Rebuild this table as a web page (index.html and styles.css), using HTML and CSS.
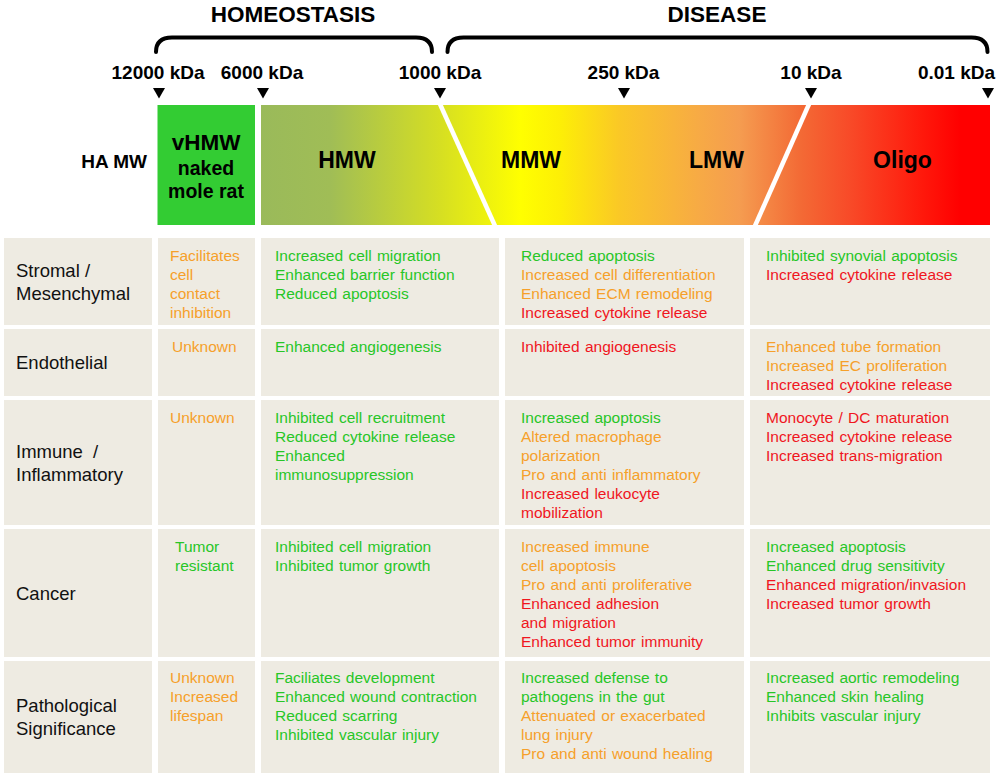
FILE: index.html
```html
<!DOCTYPE html>
<html>
<head>
<meta charset="utf-8">
<link rel="stylesheet" href="styles.css">
</head>
<body>
<div class="page">
  <svg class="scale" width="1000" height="238" viewBox="0 0 1000 238" xmlns="http://www.w3.org/2000/svg">
    <defs>
      <linearGradient id="band" gradientUnits="userSpaceOnUse" x1="261" y1="0" x2="990" y2="0">
        <stop offset="0" stop-color="#9aba5a"/>
        <stop offset="0.095" stop-color="#a0bd56"/>
        <stop offset="0.246" stop-color="#d6df22"/>
        <stop offset="0.356" stop-color="#ffff00"/>
        <stop offset="0.41" stop-color="#fdef06"/>
        <stop offset="0.492" stop-color="#fac826"/>
        <stop offset="0.602" stop-color="#f7aa45"/>
        <stop offset="0.657" stop-color="#f59c50"/>
        <stop offset="0.74" stop-color="#f36a35"/>
        <stop offset="0.808" stop-color="#f84a28"/>
        <stop offset="0.904" stop-color="#ff1a0c"/>
        <stop offset="0.959" stop-color="#ff0000"/>
        <stop offset="1" stop-color="#ff0000"/>
      </linearGradient>
    </defs>
    <text class="title" x="293" y="22">HOMEOSTASIS</text>
    <text class="title" x="717" y="22">DISEASE</text>
    <path class="brace" d="M156 52 C156 42 162 37.5 172 37.5 L416 37.5 C426 37.5 432 42 432 52"/>
    <path class="brace" d="M447.5 52 C447.5 42 453.5 37.5 463.5 37.5 L971.5 37.5 C981.5 37.5 987.5 42 987.5 52"/>
    <text class="kda" x="158" y="79">12000 kDa</text>
    <text class="kda" x="262" y="79">6000 kDa</text>
    <text class="kda" x="440" y="79">1000 kDa</text>
    <text class="kda" x="623.5" y="79">250 kDa</text>
    <text class="kda" x="811" y="79">10 kDa</text>
    <text class="kda end" x="995" y="79">0.01 kDa</text>
    <polygon class="tri" points="153,88 165,88 159,98.5"/>
    <polygon class="tri" points="257,88 269,88 263,98.5"/>
    <polygon class="tri" points="434,88 446,88 440,98.5"/>
    <polygon class="tri" points="618,88 630,88 624,98.5"/>
    <polygon class="tri" points="805,88 817,88 811,98.5"/>
    <polygon class="tri" points="982,88 994,88 988,98.5"/>
    <text class="kda end" x="147" y="168">HA MW</text>
    <rect x="157.5" y="105" width="97.5" height="120" fill="#33cc33"/>
    <rect x="261" y="105" width="729" height="120" fill="url(#band)"/>
    <line class="cut" x1="439.5" y1="103" x2="495.5" y2="227"/>
    <line class="cut" x1="809.5" y1="103" x2="754.5" y2="227"/>
    <text class="big" x="206" y="150">vHMW</text>
    <text class="mid" x="206" y="175">naked</text>
    <text class="mid" x="206" y="198">mole rat</text>
    <text class="band-label" x="347" y="168">HMW</text>
    <text class="band-label" x="531" y="168">MMW</text>
    <text class="band-label" x="716.5" y="168">LMW</text>
    <text class="band-label" x="902.5" y="168">Oligo</text>
  </svg>

  <div class="table">
    <div class="cell label">Stromal /<br>Mesenchymal</div>
    <div class="cell c2">
      <div class="o">Facilitates</div><div class="o">cell</div><div class="o">contact</div><div class="o">inhibition</div>
    </div>
    <div class="cell c3">
      <div class="g">Increased cell migration</div><div class="g">Enhanced barrier function</div><div class="g">Reduced apoptosis</div>
    </div>
    <div class="cell c4">
      <div class="g">Reduced apoptosis</div><div class="o">Increased cell differentiation</div><div class="o">Enhanced ECM remodeling</div><div class="r">Increased cytokine release</div>
    </div>
    <div class="cell c5">
      <div class="g">Inhibited synovial apoptosis</div><div class="r">Increased cytokine release</div>
    </div>

    <div class="cell label">Endothelial</div>
    <div class="cell c2 nudge2"><div class="o">Unknown</div></div>
    <div class="cell c3"><div class="g">Enhanced angiogenesis</div></div>
    <div class="cell c4"><div class="r">Inhibited angiogenesis</div></div>
    <div class="cell c5">
      <div class="o">Enhanced tube formation</div><div class="o">Increased EC proliferation</div><div class="r">Increased cytokine release</div>
    </div>

    <div class="cell label">Immune&nbsp; /<br>Inflammatory</div>
    <div class="cell c2"><div class="o">Unknown</div></div>
    <div class="cell c3">
      <div class="g">Inhibited cell recruitment</div><div class="g">Reduced cytokine release</div><div class="g">Enhanced<br>immunosuppression</div>
    </div>
    <div class="cell c4">
      <div class="g">Increased apoptosis</div><div class="o">Altered macrophage<br>polarization</div><div class="o">Pro and anti inflammatory</div><div class="r">Increased leukocyte<br>mobilization</div>
    </div>
    <div class="cell c5">
      <div class="r">Monocyte / DC maturation</div><div class="r">Increased cytokine release</div><div class="r">Increased trans-migration</div>
    </div>

    <div class="cell label">Cancer</div>
    <div class="cell c2 nudge5"><div class="g">Tumor<br>resistant</div></div>
    <div class="cell c3">
      <div class="g">Inhibited cell migration</div><div class="g">Inhibited tumor growth</div>
    </div>
    <div class="cell c4">
      <div class="o">Increased immune<br>cell apoptosis</div><div class="o">Pro and anti proliferative</div><div class="r">Enhanced adhesion<br>and migration</div><div class="r">Enhanced tumor immunity</div>
    </div>
    <div class="cell c5">
      <div class="g">Increased apoptosis</div><div class="g">Enhanced drug sensitivity</div><div class="r">Enhanced migration/invasion</div><div class="r">Increased tumor growth</div>
    </div>

    <div class="cell label">Pathological<br>Significance</div>
    <div class="cell c2 top6">
      <div class="o">Unknown</div><div class="o">Increased<br>lifespan</div>
    </div>
    <div class="cell c3 top6">
      <div class="g">Faciliates development</div><div class="g">Enhanced wound contraction</div><div class="g">Reduced scarring</div><div class="g">Inhibited vascular injury</div>
    </div>
    <div class="cell c4 top6">
      <div class="g">Increased defense to<br>pathogens in the gut</div><div class="o">Attenuated or exacerbated<br>lung injury</div><div class="o">Pro and anti wound healing</div>
    </div>
    <div class="cell c5 top6">
      <div class="g">Increased aortic remodeling</div><div class="g">Enhanced skin healing</div><div class="g">Inhibits vascular injury</div>
    </div>
  </div>
</div>
</body>
</html>
```

FILE: styles.css
```css
html, body {
  margin: 0;
  padding: 0;
  background: #ffffff;
}

.page {
  width: 1000px;
  height: 778px;
  overflow: hidden;
  font-family: "Liberation Sans", Arial, sans-serif;
}

.scale {
  display: block;
}

.scale text {
  font-family: "Liberation Sans", Arial, sans-serif;
  font-weight: bold;
  fill: #000000;
  text-anchor: middle;
}

.scale .title {
  font-size: 22.5px;
}

.scale .kda {
  font-size: 19px;
}

.scale .end {
  text-anchor: end;
}

.scale .big {
  font-size: 22.5px;
}

.scale .mid {
  font-size: 19.5px;
}

.scale .band-label {
  font-size: 23px;
}

.brace {
  fill: none;
  stroke: #000000;
  stroke-width: 4;
  stroke-linecap: round;
}

.tri {
  fill: #000000;
}

.cut {
  stroke: #ffffff;
  stroke-width: 4.5;
}

.table {
  display: grid;
  grid-template-columns: 148px 97px 238px 239px 240px;
  grid-template-rows: 87px 67px 125px 128px 112px;
  column-gap: 6px;
  row-gap: 4px;
  padding-left: 4px;
}

.cell {
  background: #eeebe2;
  box-sizing: border-box;
  padding-top: 7.5px;
  font-size: 15.5px;
  line-height: 19px;
  word-spacing: 1px;
}

.label {
  display: flex;
  align-items: center;
  padding: 0 0 0 12px;
  font-size: 18.5px;
  line-height: 23px;
  color: #111111;
  word-spacing: 0;
}

.c2 {
  padding-left: 12px;
}

.c3 {
  padding-left: 14px;
}

.c4 {
  padding-left: 16px;
}

.c5 {
  padding-left: 16px;
}

.nudge2 {
  padding-left: 14px;
}

.nudge5 {
  padding-left: 17px;
}

.top6 {
  padding-top: 6.5px;
}

.g {
  color: #27c627;
}

.o {
  color: #f6a02a;
}

.r {
  color: #f0161e;
}
```
